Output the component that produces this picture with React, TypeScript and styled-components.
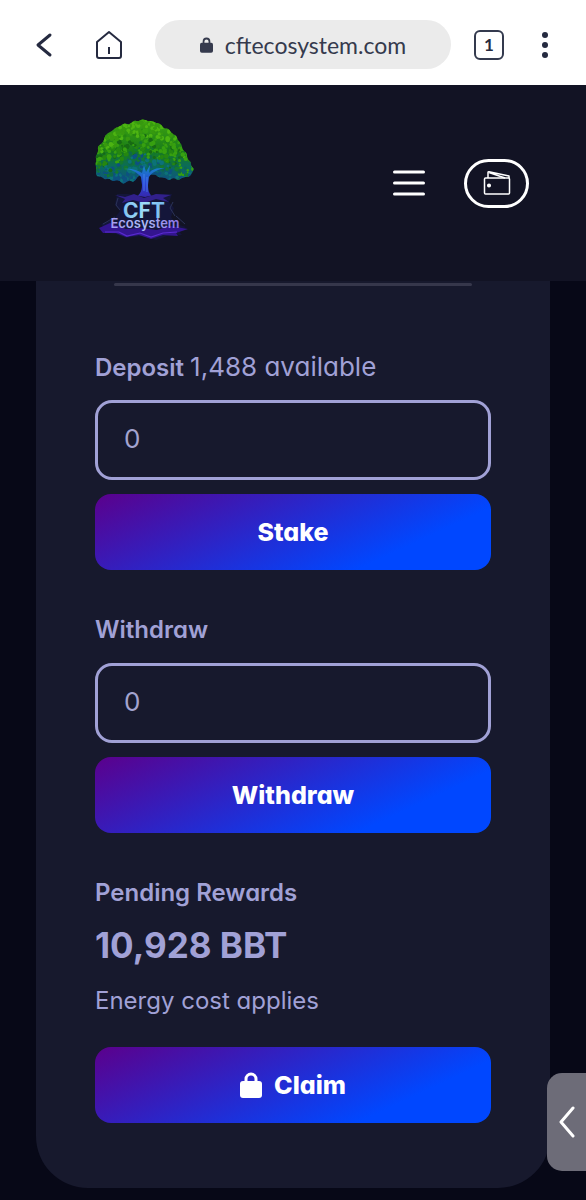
import React from "react";
import styled, { createGlobalStyle } from "styled-components";

const GlobalStyle = createGlobalStyle`
  *, *::before, *::after { box-sizing: border-box; }
  body {
    margin: 0;
    background: #070817;
    color: #a1a1d6;
    font-family: Inter, "Open Sans", sans-serif;
    font-feature-settings: "cv11";
  }
  button, input { font: inherit; font-feature-settings: inherit; color: inherit; }
  button { padding: 0; border: 0; background: none; cursor: pointer; }
`;

const BrowserBar = styled.div`
  display: flex;
  align-items: center;
  height: 85px;
  padding: 4px 23px 0 26px;
  background: #fff;
  color: #252a40;
`;

const BarButton = styled.button<{ $gap?: number }>`
  display: flex;
  align-items: center;
  justify-content: center;
  flex: none;
  width: 36px;
  height: 48px;
  margin-right: ${(p) => p.$gap ?? 0}px;
`;

const AddressPill = styled.button`
  display: flex;
  flex: 1;
  min-width: 0;
  align-items: center;
  justify-content: center;
  gap: 12px;
  height: 49px;
  margin-right: 20px;
  border-radius: 25px;
  background: #ebebeb;
  color: #353a4d;
  font-family: Lato, sans-serif;
  font-size: 23px;
`;

const TabCount = styled.span`
  display: flex;
  align-items: center;
  justify-content: center;
  width: 30px;
  height: 30px;
  border: 2px solid #343a4e;
  border-radius: 6px;
  font-family: Lato, sans-serif;
  font-size: 17px;
  font-weight: 700;
`;

const SiteHeader = styled.header`
  display: flex;
  align-items: center;
  height: 196px;
  padding: 0 57px 0 94px;
  background: #121324;
  color: #fff;
`;

const LogoLink = styled.a`
  display: block;
  height: 130px;
  margin-right: auto;
`;

const MenuButton = styled.button`
  display: flex;
  margin-right: 39px;
`;

const WalletButton = styled.button`
  display: flex;
  align-items: center;
  justify-content: center;
  width: 65px;
  height: 49px;
  border: 3px solid #fff;
  border-radius: 25px;
`;

const Card = styled.main`
  margin: 0 36px 11px;
  padding: 2px 59px 65px;
  border-radius: 0 0 52px 52px;
  background: #17192d;
`;

const Divider = styled.hr`
  height: 3px;
  margin: 0 19px 61px;
  border: 0;
  border-radius: 2px;
  background: #36374b;
`;

const Field = styled.section`
  display: flex;
  flex-direction: column;
  margin-bottom: 40px;
`;

const Label = styled.label`
  height: 40px;
  margin-bottom: 13px;
  line-height: 40px;
  font-size: 24px;
  font-weight: 600;
`;

const Available = styled.span`
  font-size: 26px;
  font-weight: 400;
`;

const AmountInput = styled.input`
  width: 100%;
  height: 80px;
  margin-bottom: 14px;
  padding: 0 26px 4px;
  border: 3px solid #a1a1d6;
  border-radius: 17px;
  background: transparent;
  font-size: 26px;
  outline: none;
  &::placeholder { color: #a3a3cf; opacity: 1; }
`;

const ActionButton = styled.button`
  display: flex;
  align-items: center;
  justify-content: center;
  gap: 12px;
  width: 100%;
  height: 76px;
  border-radius: 16px;
  background: linear-gradient(155deg, #5b008c 0%, #0047ff 76%);
  color: #fff;
  font-size: 25px;
  font-weight: 800;
`;

const RewardsTitle = styled.h2`
  margin: 0;
  line-height: 40px;
  font-size: 24px;
  font-weight: 600;
`;

const RewardsAmount = styled.p`
  margin: 6px 0 10px;
  line-height: 52px;
  font-size: 35px;
  font-weight: 700;
`;

const RewardsNote = styled.p`
  margin: 0 0 26px;
  line-height: 40px;
  font-size: 24px;
`;

const SideTab = styled.button`
  position: fixed;
  right: 0;
  bottom: 29px;
  display: flex;
  align-items: center;
  justify-content: center;
  width: 39px;
  height: 98px;
  border-radius: 15px 0 0 15px;
  background: #6d6c78;
`;

function seeded(seed: number) {
  let s = seed;
  return () => {
    s = (s * 16807) % 2147483647;
    return s / 2147483647;
  };
}

const CANOPY =
  "M16 62c-1-4 1-6 0-9s3-5 2-9 5-5 6-9 2-6 6-8 4-4 8-5 4-4 9-3 5-4 9-3 5-3 9-1 7 0 9 2 6 0 8 4 6 1 8 5 6 3 7 7 5 5 5 9 5 4 5 9 4 4 4 8 4 3 2 7-3 6-8 6-5 5-9 2-6 3-9 0-7 0-10-3-7 0-9-2-6 0-9 2-4 7-8 5-6 5-10 1-7 1-10-2-5 1-8-2-6 0-7-4z";

const rand = seeded(91);
const LEAVES = Array.from({ length: 760 }, () => {
  const x = 14 + rand() * 101;
  const y = 14 + rand() * 66;
  const depth = (y - 14) / 62 + (rand() - 0.5) * 0.26 - Math.abs(x - 62) / 130;
  const r = 0.9 + rand() * 1.6;
  const pick = rand();
  const fill =
    depth < 0.2
      ? pick > 0.5 ? "#4db412" : "#37990f"
      : depth < 0.48
      ? pick > 0.6 ? "#37a010" : pick > 0.25 ? "#258710" : "#176a14"
      : depth < 0.6
      ? pick > 0.5 ? "#14782f" : "#0f6848"
      : pick > 0.5 ? "#0c7279" : "#0d5180";
  return { x, y, r, fill };
});

function TreeLogo() {
  return (
    <svg width="101" height="130" viewBox="14 13 101 130" role="img" aria-label="CFT Ecosystem">
      <defs>
        <linearGradient id="canopy" x1="0" y1="0" x2="0" y2="1">
          <stop offset="0" stopColor="#3fa50f" />
          <stop offset="0.5" stopColor="#187b1b" />
          <stop offset="0.75" stopColor="#0a6a5e" />
          <stop offset="1" stopColor="#115083" />
        </linearGradient>
        <linearGradient id="trunk" x1="0" y1="0" x2="0" y2="1">
          <stop offset="0" stopColor="#158bc4" />
          <stop offset="0.5" stopColor="#2a45d8" />
          <stop offset="1" stopColor="#3a1d9c" />
        </linearGradient>
        <linearGradient id="cft" x1="0" y1="0" x2="1" y2="0">
          <stop offset="0" stopColor="#6fb4ee" />
          <stop offset="0.5" stopColor="#9fdcf8" />
          <stop offset="1" stopColor="#4f9be6" />
        </linearGradient>
        <linearGradient id="eco" x1="0" y1="0" x2="1" y2="0">
          <stop offset="0" stopColor="#a49cf0" />
          <stop offset="0.5" stopColor="#aebcf5" />
          <stop offset="1" stopColor="#8b70e6" />
        </linearGradient>
        <clipPath id="canopyClip"><path d={CANOPY} /></clipPath>
      </defs>
      <path d={CANOPY} fill="url(#canopy)" />
      <g clipPath="url(#canopyClip)">
        {LEAVES.map((l, i) => (
          <circle key={i} cx={l.x} cy={l.y} r={l.r} fill={l.fill} />
        ))}
      </g>
      <path
        d="M44 64c7 0 13 3 17 8l1 8c0 7-3 11-9 14l-13 3h48l-12-3c-6-3-8-7-8-14l1-8c3-5 8-7 15-9-7 0-12 1-15 5l1-8-4 7-2-7-2 8c-5-3-11-5-18-4z"
        fill="url(#trunk)"
      />
      <path d="M64 69v17m3-14v15" stroke="#579cf2" strokeWidth="1" opacity=".6" />
      <path d="M37 89l-2 11 5 6-6 8-13 5 4 5-3 3 14 2 10 4 16-2 14 4 11-4 15-1-3-4 7-4-10-3-5-7 3-9-5-6 3-8-14 0-13 3-17-3z" fill="#14163a" />
      <path d="M35 90l10 2 9-3 10 4 12-4 15 1-8 3 6 4-13-3-12 4-11-3-11 3 3-4z" fill="#31208b" />
      <path d="M38 93l-2 7 4 5m53-8l-3 6 5 8M35 112l-12 7m73-8l9 8" fill="none" stroke="#2b3358" strokeWidth="1" />
      <path d="M19 123l11-5 16 6 15-1 16 2 13-4 18 3-12 4 2 3-15-1-12 4-12-4-13 2-10-4-13 0z" fill="#33158f" />
      <path d="M25 127l14 0 8 4 13-3 11 4 12-4 14-1" fill="none" stroke="#5a2bd0" strokeWidth="1.2" />
      <text x="64" y="113" textAnchor="middle" fontFamily="Inter, sans-serif" fontSize="21" fontWeight="700" fill="url(#cft)">
        CFT
        <tspan x="65" y="123" fontSize="13" fontWeight="600" fill="url(#eco)">Ecosystem</tspan>
      </text>
    </svg>
  );
}

function LockIcon({ width, height }: { width: number; height: number }) {
  return (
    <svg width={width} height={height} viewBox="0 0 22 26" aria-hidden="true">
      <rect x="0" y="9" width="22" height="17" rx="3" fill="currentColor" />
      <path d="M6 11V7a5 5 0 0 1 10 0v4" fill="none" stroke="currentColor" strokeWidth="3" />
    </svg>
  );
}

export default function App() {
  return (
    <>
      <GlobalStyle />
      <BrowserBar>
        <BarButton $gap={29} aria-label="Back">
          <svg width="18" height="26" viewBox="0 0 18 26" fill="none" stroke="currentColor" strokeWidth="3" strokeLinecap="round" strokeLinejoin="round">
            <path d="M15 3L3 13l12 10" />
          </svg>
        </BarButton>
        <BarButton $gap={28} aria-label="Home">
          <svg width="28" height="30" viewBox="0 0 28 30" fill="none" stroke="currentColor" strokeWidth="2" strokeLinejoin="round">
            <path d="M2 12L14 2l12 10v14q0 2-2 2H4q-2 0-2-2zM14 17v7" />
          </svg>
        </BarButton>
        <AddressPill>
          <LockIcon width={13} height={16} />
          cftecosystem.com
        </AddressPill>
        <BarButton $gap={20} aria-label="Open tabs">
          <TabCount>1</TabCount>
        </BarButton>
        <BarButton aria-label="More">
          <svg width="6" height="26" viewBox="0 0 6 26" fill="currentColor">
            <circle cx="3" cy="3" r="3" />
            <circle cx="3" cy="13" r="3" />
            <circle cx="3" cy="23" r="3" />
          </svg>
        </BarButton>
      </BrowserBar>

      <SiteHeader>
        <LogoLink href="#"><TreeLogo /></LogoLink>
        <MenuButton aria-label="Menu">
          <svg width="32" height="26" viewBox="0 0 32 26" stroke="#fff" strokeWidth="3" strokeLinecap="round">
            <path d="M1.5 2h29M1.5 13h29M1.5 24h29" />
          </svg>
        </MenuButton>
        <WalletButton aria-label="Wallet">
          <svg width="28" height="26" viewBox="0 0 28 26" fill="none" stroke="#fff" strokeWidth="1.5" strokeLinejoin="round">
            <rect x="1.5" y="8" width="25" height="16" rx="1" />
            <path d="M5 8V2.500q0-1 1-.8L26 6v2M6 2.500L22 8" />
            <circle cx="6" cy="15.500" r="1.300" fill="#fff" />
          </svg>
        </WalletButton>
      </SiteHeader>

      <Card>
        <Divider />
        <Field>
          <Label htmlFor="deposit">
            Deposit <Available>1,488 available</Available>
          </Label>
          <AmountInput id="deposit" inputMode="decimal" placeholder="0" />
          <ActionButton>Stake</ActionButton>
        </Field>
        <Field>
          <Label htmlFor="withdraw">Withdraw</Label>
          <AmountInput id="withdraw" inputMode="decimal" placeholder="0" />
          <ActionButton>Withdraw</ActionButton>
        </Field>
        <RewardsTitle>Pending Rewards</RewardsTitle>
        <RewardsAmount>10,928 BBT</RewardsAmount>
        <RewardsNote>Energy cost applies</RewardsNote>
        <ActionButton>
          <LockIcon width={22} height={26} />
          Claim
        </ActionButton>
      </Card>

      <SideTab aria-label="Open panel">
        <svg width="16" height="34" viewBox="0 0 16 34" fill="none" stroke="#fff" strokeWidth="3" strokeLinecap="round" strokeLinejoin="round">
          <path d="M14 3L2 17l12 14" />
        </svg>
      </SideTab>
    </>
  );
}
